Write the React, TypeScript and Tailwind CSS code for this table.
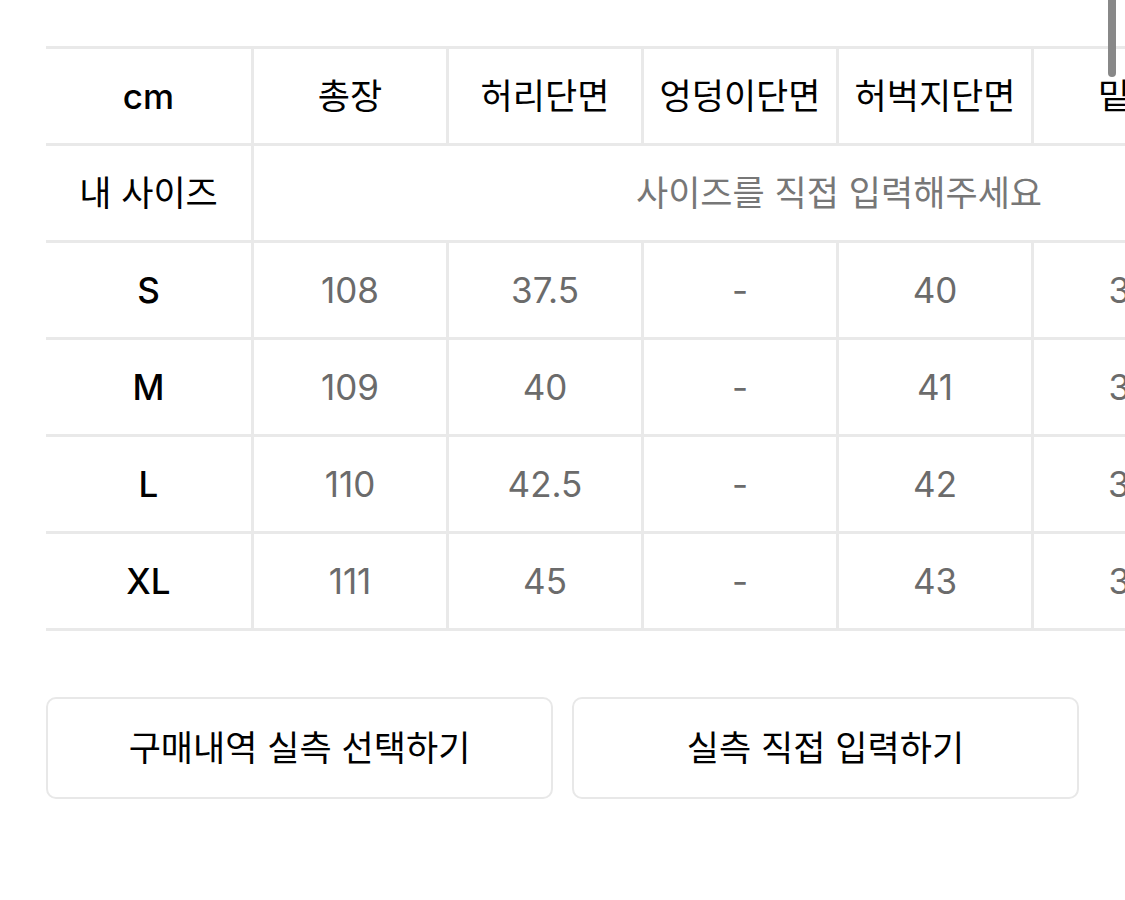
import React from 'react';

const columns = ['총장', '허리단면', '엉덩이단면', '허벅지단면', '밑위', '밑단단면'];

const sizes = [
  { size: 'S', values: ['108', '37.5', '-', '40', '32', '20'] },
  { size: 'M', values: ['109', '40', '-', '41', '33', '21'] },
  { size: 'L', values: ['110', '42.5', '-', '42', '34', '22'] },
  { size: 'XL', values: ['111', '45', '-', '43', '35', '23'] },
];

const font = { fontFamily: 'Inter, "Noto Sans CJK KR", sans-serif' };

function Row({ children }: { children: React.ReactNode }) {
  return <div className="flex h-[97px] border-b-[3px] border-[#e9e9e9]">{children}</div>;
}

function LabelCell({ children, latin }: { children: React.ReactNode; latin?: boolean }) {
  return (
    <div
      className={
        latin
          ? 'flex w-[208px] shrink-0 items-center justify-center border-r-[3px] border-[#e9e9e9] text-[35px] font-medium text-black'
          : 'flex w-[208px] shrink-0 items-center justify-center border-r-[3px] border-[#e9e9e9] text-[35px] text-black'
      }
    >
      {children}
    </div>
  );
}

function Cell({ children, head }: { children: React.ReactNode; head?: boolean }) {
  return (
    <div
      className={
        head
          ? 'flex w-[195px] shrink-0 items-center justify-center border-r-[3px] border-[#e9e9e9] text-[35px] text-black'
          : 'flex w-[195px] shrink-0 items-center justify-center border-r-[3px] border-[#e9e9e9] text-[35px] text-[#6b6b6b]'
      }
    >
      {children}
    </div>
  );
}

function ActionButton({ label }: { label: string }) {
  return (
    <button className="flex h-[102px] flex-1 items-center justify-center rounded-[10px] border-2 border-[#e8e8e8] bg-white text-[35px] text-black">
      {label}
    </button>
  );
}

export default function App() {
  return (
    <div className="relative h-[900px] w-[1125px] overflow-hidden bg-white" style={font}>
      <div className="overflow-hidden pl-[46px] pt-[46px]">
        <div className="w-max border-t-[3px] border-[#e9e9e9]">
          <Row>
            <LabelCell latin>cm</LabelCell>
            {columns.map((c) => (
              <Cell key={c} head>
                {c}
              </Cell>
            ))}
          </Row>
          <Row>
            <LabelCell>내 사이즈</LabelCell>
            <div className="flex w-[1170px] items-center justify-center text-[35px] text-[#777]">
              사이즈를 직접 입력해주세요
            </div>
          </Row>
          {sizes.map((r) => (
            <Row key={r.size}>
              <LabelCell latin>{r.size}</LabelCell>
              {r.values.map((v, i) => (
                <Cell key={i}>{v}</Cell>
              ))}
            </Row>
          ))}
        </div>
      </div>

      <div className="mt-[66px] flex gap-[19px] px-[46px]">
        <ActionButton label="구매내역 실측 선택하기" />
        <ActionButton label="실측 직접 입력하기" />
      </div>

      {/* scroll indicator */}
      <div className="absolute right-[9px] top-0 h-[77px] w-[8px] rounded-b-full bg-[#888]" />
    </div>
  );
}
